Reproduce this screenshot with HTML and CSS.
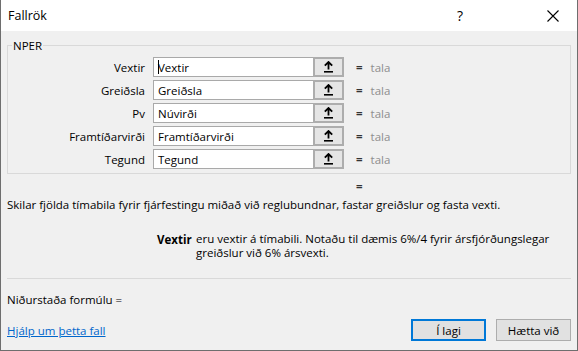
FILE: index.html
```html
<!DOCTYPE html>
<html lang="is">
<head>
  <meta charset="UTF-8" />
  <title>Fallrök</title>
  <link rel="stylesheet" href="styles.css">
</head>
<body>
  <div class="window">

    <!-- Title bar -->
    <div class="titlebar">
      <div class="title">Fallrök</div>
      <div class="title-btn help">?</div>
      <div class="title-btn close">
        <svg width="12" height="12" viewBox="0 0 12 12"><path d="M0.5 0.5 L11.5 11.5 M11.5 0.5 L0.5 11.5" stroke="#000" stroke-width="1.1" fill="none"/></svg>
      </div>
    </div>

    <div class="content">

      <!-- Arguments -->
      <fieldset class="args">
        <legend>NPER</legend>

        <div class="arg-row">
          <label>Vextir</label>
          <div class="arg-input"><span class="caret"></span>Vextir</div>
          <div class="ref-btn"><svg width="11" height="12" viewBox="0 0 11 12"><path d="M5.5 1 L5.5 8.5 M1.8 4.7 L5.5 1 L9.2 4.7" stroke="#000" stroke-width="1.8" fill="none"/><rect x="1" y="10" width="9" height="1.6" fill="#000"/></svg></div>
          <span class="eq">=</span>
          <span class="val">tala</span>
        </div>

        <div class="arg-row">
          <label>Greiðsla</label>
          <div class="arg-input">Greiðsla</div>
          <div class="ref-btn"><svg width="11" height="12" viewBox="0 0 11 12"><path d="M5.5 1 L5.5 8.5 M1.8 4.7 L5.5 1 L9.2 4.7" stroke="#000" stroke-width="1.8" fill="none"/><rect x="1" y="10" width="9" height="1.6" fill="#000"/></svg></div>
          <span class="eq">=</span>
          <span class="val">tala</span>
        </div>

        <div class="arg-row">
          <label>Pv</label>
          <div class="arg-input">Núvirði</div>
          <div class="ref-btn"><svg width="11" height="12" viewBox="0 0 11 12"><path d="M5.5 1 L5.5 8.5 M1.8 4.7 L5.5 1 L9.2 4.7" stroke="#000" stroke-width="1.8" fill="none"/><rect x="1" y="10" width="9" height="1.6" fill="#000"/></svg></div>
          <span class="eq">=</span>
          <span class="val">tala</span>
        </div>

        <div class="arg-row">
          <label>Framtíðarvirði</label>
          <div class="arg-input">Framtíðarvirði</div>
          <div class="ref-btn"><svg width="11" height="12" viewBox="0 0 11 12"><path d="M5.5 1 L5.5 8.5 M1.8 4.7 L5.5 1 L9.2 4.7" stroke="#000" stroke-width="1.8" fill="none"/><rect x="1" y="10" width="9" height="1.6" fill="#000"/></svg></div>
          <span class="eq">=</span>
          <span class="val">tala</span>
        </div>

        <div class="arg-row">
          <label>Tegund</label>
          <div class="arg-input">Tegund</div>
          <div class="ref-btn"><svg width="11" height="12" viewBox="0 0 11 12"><path d="M5.5 1 L5.5 8.5 M1.8 4.7 L5.5 1 L9.2 4.7" stroke="#000" stroke-width="1.8" fill="none"/><rect x="1" y="10" width="9" height="1.6" fill="#000"/></svg></div>
          <span class="eq">=</span>
          <span class="val">tala</span>
        </div>
      </fieldset>

      <div class="result-eq">=</div>

      <p class="desc">Skilar fjölda tímabila fyrir fjárfestingu miðað við reglubundnar, fastar greiðslur og fasta vexti.</p>

      <div class="arg-help">
        <div class="arg-name">Vextir</div>
        <div class="arg-text">eru vextir á tímabili. Notaðu til dæmis 6%/4 fyrir ársfjórðungslegar greiðslur við 6% ársvexti.</div>
      </div>

      <hr class="sep">

      <div class="formula-result">Niðurstaða formúlu =</div>

      <div class="footer">
        <a href="#" class="help-link">Hjálp um þetta fall</a>
        <div class="buttons">
          <button class="btn primary">Í lagi</button>
          <button class="btn">Hætta við</button>
        </div>
      </div>

    </div>
  </div>
</body>
</html>
```

FILE: styles.css
```css
* {
  box-sizing: border-box;
  margin: 0;
  padding: 0;
}

body {
  font-family: 'Open Sans', sans-serif;
  font-size: 11.5px;
  color: #000;
  background: #fff;
}

.window {
  width: 578px;
  height: 351px;
  border: 1px solid #6e6e6e;
  border-top: none;
  background: #f0f0f0;
  display: flex;
  flex-direction: column;
}

.titlebar {
  height: 31px;
  background: #fff;
  display: flex;
  align-items: center;
}

.title {
  flex: 1;
  padding-left: 7px;
  font-size: 12.5px;
}

.title-btn {
  width: 46px;
  height: 31px;
  display: flex;
  align-items: center;
  justify-content: center;
}

.help {
  font-size: 14px;
  margin-right: 47px;
}

.close {
  margin-right: 1px;
}

.content {
  padding: 0 5px;
  flex: 1;
  display: flex;
  flex-direction: column;
}

.args {
  margin-top: 7px;
  border: 1px solid #d9d9d9;
  padding: 4px 0 4px 0;
  margin-left: 1px;
  margin-right: 1px;
}

.args legend {
  margin-left: 4px;
  padding: 0 1px;
}

.arg-row {
  display: flex;
  align-items: center;
  height: 20px;
  margin-bottom: 3px;
}

.arg-row:last-child {
  margin-bottom: 0;
}

.arg-row label {
  width: 138px;
  text-align: right;
  padding-right: 1px;
  margin-right: 7px;
}

.arg-input {
  width: 160px;
  height: 20px;
  background: #fff;
  border: 1px solid #a9a9a9;
  border-right: none;
  padding-left: 4px;
  display: flex;
  align-items: center;
}

.caret {
  width: 1px;
  height: 14px;
  background: #000;
  margin-right: -1px;
}

.ref-btn {
  width: 31px;
  height: 20px;
  background: #e5e5e5;
  border: 2px solid #adadad;
  display: flex;
  align-items: center;
  justify-content: center;
}

.eq {
  margin-left: 12px;
  font-weight: bold;
  color: #333;
}

.val {
  margin-left: 8px;
  color: #8e8e8e;
}

.result-eq {
  margin-left: 350px;
  margin-top: 5px;
  font-weight: bold;
  color: #333;
  height: 16px;
}

.desc {
  margin-top: 2px;
  margin-left: 1px;
}

.arg-help {
  display: flex;
  margin-top: 20px;
  margin-left: 151px;
}

.arg-name {
  font-weight: bold;
  width: 39px;
}

.arg-text {
  width: 370px;
  line-height: 14px;
}

.sep {
  border: none;
  border-top: 1px solid #d9d9d9;
  margin-top: 18px;
  margin-left: 1px;
  margin-right: 1px;
}

.formula-result {
  margin-top: 13px;
  margin-left: 1px;
}

.footer {
  display: flex;
  justify-content: space-between;
  align-items: center;
  margin-top: 12px;
}

.help-link {
  color: #0066cc;
  margin-left: 1px;
}

.buttons {
  display: flex;
  gap: 10px;
  margin-right: 1px;
}

.btn {
  width: 75px;
  height: 22px;
  font-family: 'Open Sans', sans-serif;
  font-size: 11.5px;
  background: #e1e1e1;
  border: 1px solid #adadad;
  color: #000;
}

.btn.primary {
  border: 2px solid #0078d7;
}
```
